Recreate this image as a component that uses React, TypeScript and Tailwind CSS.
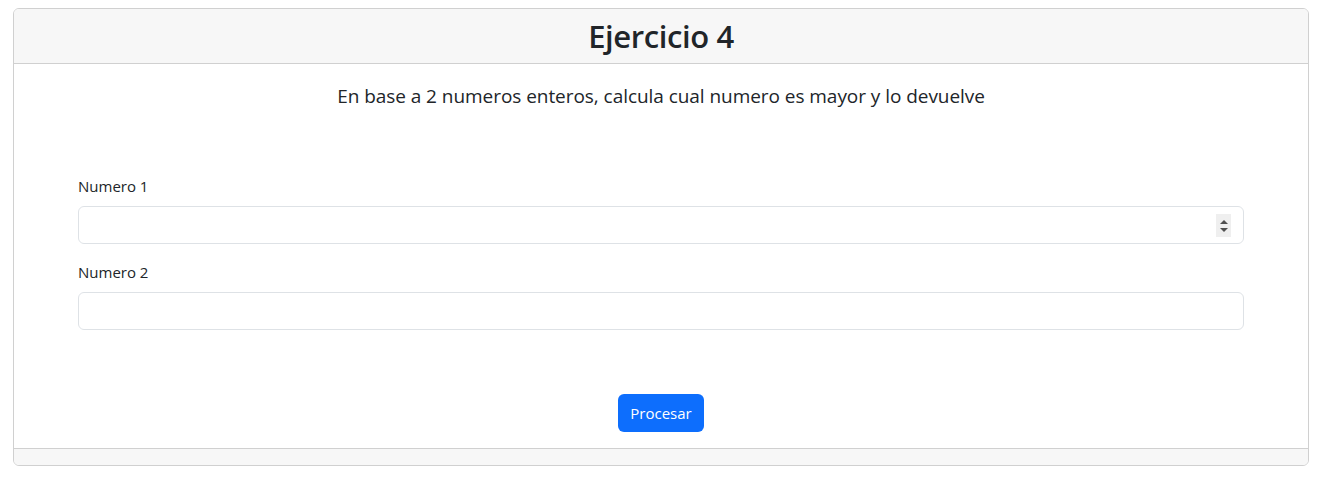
import React from "react";

export default function App() {
  return (
    <div
      className="w-[1328px] h-[489px] bg-white pt-[8px] px-[13px]"
      style={{ fontFamily: '"Segoe UI", "Open Sans", "Noto Sans", sans-serif' }}
    >
      <div className="w-[1296px] border border-[#d0d0d0] rounded-[6px] overflow-hidden flex flex-col text-[#212529]">
        <div className="h-[55px] bg-[#f7f7f7] border-b border-[#d0d0d0] flex items-center justify-center">
          <h2 className="text-[31px] font-semibold leading-none tracking-[-0.4px]">Ejercicio 4</h2>
        </div>
        <div className="bg-white flex flex-col">
          <p className="text-center text-[19px] leading-[24px] mt-[20px] tracking-[-0.05px]">
            En base a 2 numeros enteros, calcula cual numero es mayor y lo devuelve
          </p>
          <div className="px-[64px] mt-[68px]">
            <label className="block text-[15px] leading-[20px] mb-[10px]">Numero 1</label>
            <div className="relative h-[38px] border border-[#dee2e6] rounded-[6px] bg-white">
              <div className="absolute right-[12px] top-[7px] w-[15px] h-[23px] bg-[#efefef] flex flex-col items-center justify-center gap-[4px]">
                <svg width="8" height="4" viewBox="0 0 8 4"><path d="M4 0L8 4H0z" fill="#505050" /></svg>
                <svg width="8" height="4" viewBox="0 0 8 4"><path d="M0 0h8L4 4z" fill="#505050" /></svg>
              </div>
            </div>
            <label className="block text-[15px] leading-[20px] mt-[18px] mb-[10px]">Numero 2</label>
            <div className="h-[38px] border border-[#dee2e6] rounded-[6px] bg-white"></div>
          </div>
          <div className="flex justify-center mt-[64px] mb-[16px]">
            <button className="h-[38px] px-[12px] bg-[#0d6efd] text-white rounded-[6px] text-[15px] leading-none">
              Procesar
            </button>
          </div>
        </div>
        <div className="h-[17px] bg-[#f7f7f7] border-t border-[#d0d0d0]"></div>
      </div>
    </div>
  );
}
